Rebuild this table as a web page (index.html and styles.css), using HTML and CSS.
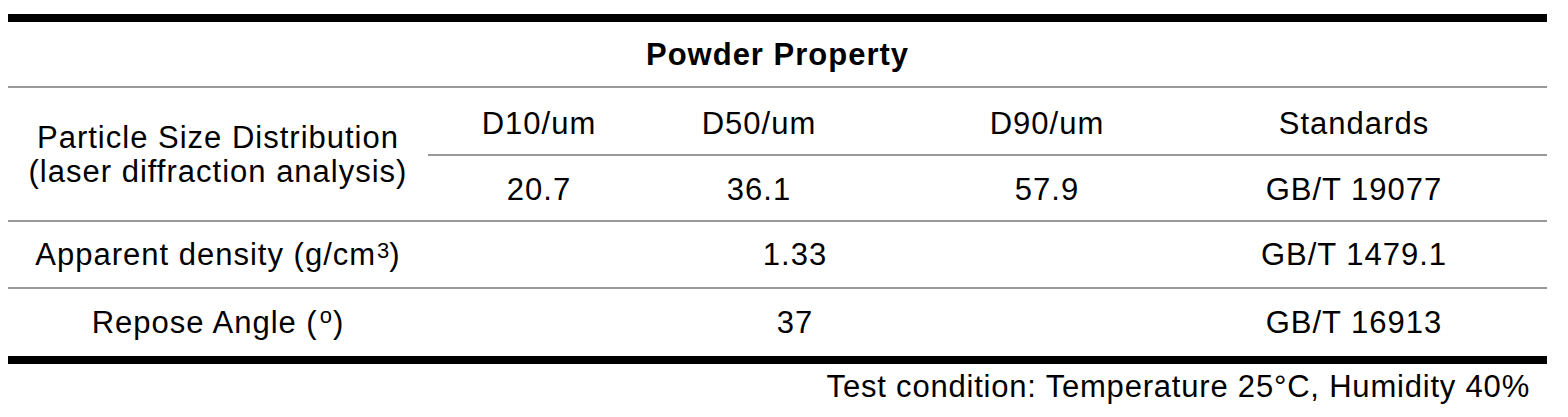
FILE: index.html
```html
<!DOCTYPE html>
<html>
<head>
<meta charset="utf-8">
<link rel="stylesheet" href="styles.css">
</head>
<body>
<div class="page">
  <div class="table">
    <div class="cell head">Powder Property</div>

    <div class="cell label tall"><span>Particle Size Distribution<br>(laser diffraction analysis)</span></div>
    <div class="cell sub">D10/um</div>
    <div class="cell sub">D50/um</div>
    <div class="cell sub">D90/um</div>
    <div class="cell sub std">Standards</div>

    <div class="cell val">20.7</div>
    <div class="cell val">36.1</div>
    <div class="cell val">57.9</div>
    <div class="cell val std">GB/T 19077</div>

    <div class="cell row3"><span>Apparent density (g/cm<sup class="sup">3</sup>)</span></div>
    <div class="cell row3 merged">1.33</div>
    <div class="cell row3 std">GB/T 1479.1</div>

    <div class="cell row4 last"><span>Repose Angle (<sup class="sup deg">o</sup>)</span></div>
    <div class="cell row4 merged last">37</div>
    <div class="cell row4 std last">GB/T 16913</div>
  </div>
  <div class="note">Test condition: Temperature 25°C, Humidity 40%</div>
</div>
</body>
</html>
```
FILE: styles.css
```css
html, body {
  margin: 0;
  padding: 0;
  background: #fff;
}

.page {
  width: 1539px;
  margin: 14px 0 0 8px;
  font-family: "Liberation Sans", Arial, sans-serif;
  font-size: 31px;
  letter-spacing: 1px;
  color: #000;
}

.table {
  display: grid;
  grid-template-columns: 420px 222px 218px 358px 321px;
  grid-template-rows: 66px 68px 66px 67px 67px;
  border-top: 8px solid #000;
  border-bottom: 8px solid #000;
}

.cell {
  box-sizing: border-box;
  display: flex;
  align-items: center;
  justify-content: center;
  text-align: center;
  border-bottom: 2px solid #999;
  line-height: 34px;
}

.cell.last {
  border-bottom: none;
}

.head {
  grid-column: 1 / -1;
  font-weight: bold;
  padding-top: 2px;
}

.tall {
  grid-row: 2 / 4;
  padding-top: 2px;
}

.sub {
  padding-top: 6px;
}

.val {
  padding-top: 4px;
}

.std {
  padding-right: 65px;
}

.merged {
  grid-column: 2 / 5;
  padding-right: 64px;
}

.sup {
  font-size: 22px;
  line-height: 0;
  letter-spacing: 0;
  vertical-align: 7px;
  margin-left: 1px;
}

.sup.deg {
  vertical-align: 10px;
  margin-left: 2px;
  margin-right: 1px;
}

.note {
  text-align: right;
  padding-right: 17px;
  padding-top: 6px;
  font-size: 31px;
  letter-spacing: 0.8px;
  line-height: 34px;
}
```
